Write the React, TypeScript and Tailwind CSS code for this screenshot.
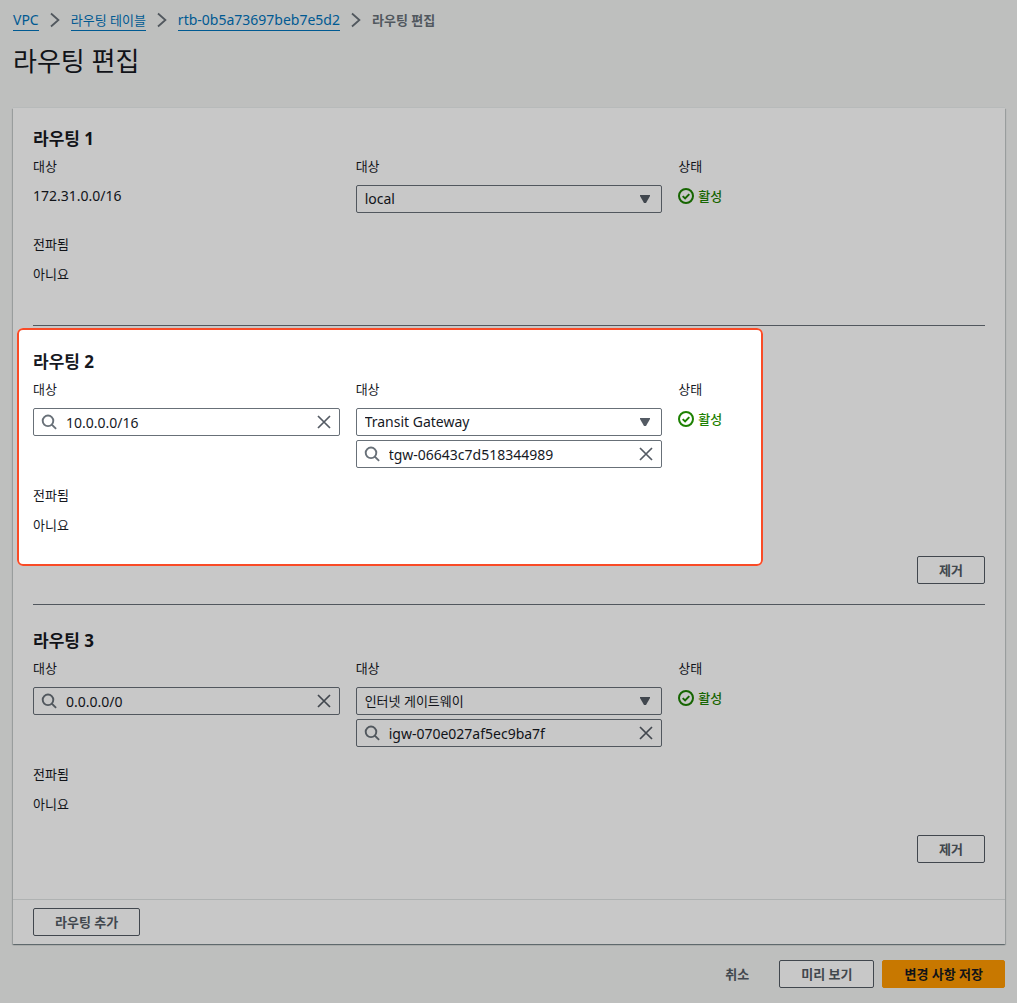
import { useId, useState } from "react";

type Target = { kind: string; id?: string };
type Route = {
  index: number;
  destination: string;
  target: Target;
  editable: boolean;
  highlighted?: boolean;
};

const ROUTES: Route[] = [
  { index: 1, destination: "172.31.0.0/16", target: { kind: "local" }, editable: false },
  {
    index: 2,
    destination: "10.0.0.0/16",
    target: { kind: "Transit Gateway", id: "tgw-06643c7d518344989" },
    editable: true,
    highlighted: true,
  },
  {
    index: 3,
    destination: "0.0.0.0/0",
    target: { kind: "인터넷 게이트웨이", id: "igw-070e027af5ec9ba7f" },
    editable: true,
  },
];

const TARGET_KINDS = ["local", "Transit Gateway", "인터넷 게이트웨이"];

function ChevronIcon() {
  return (
    <svg viewBox="0 0 10 16" className="h-4 w-2.5 shrink-0" fill="none" stroke="#687078" strokeWidth="1.8" aria-hidden="true">
      <path d="M1 1.5 8.4 8 1 14.5" />
    </svg>
  );
}

function SearchIcon() {
  return (
    <svg viewBox="0 0 16 16" className="h-4 w-4 shrink-0" fill="none" stroke="#687078" strokeWidth="1.9" aria-hidden="true">
      <circle cx="7" cy="6.8" r="5.3" />
      <path d="m10.8 10.6 4.3 4.3" />
    </svg>
  );
}

function CloseIcon() {
  return (
    <svg viewBox="0 0 16 16" className="h-4 w-4" fill="none" stroke="#545b64" strokeWidth="1.7" aria-hidden="true">
      <path d="m2 2 12 12M14 2 2 14" />
    </svg>
  );
}

function StatusIcon() {
  return (
    <svg viewBox="0 0 16 16" className="h-4 w-4" fill="none" stroke="#1d8102" strokeWidth="2" aria-hidden="true">
      <circle cx="8" cy="8" r="7" />
      <path d="m4.7 8.1 2.4 2.3 4.2-4.3" />
    </svg>
  );
}

function SearchField({ initial, label, id }: { initial: string; label?: string; id?: string }) {
  const [value, setValue] = useState(initial);
  return (
    <div className="flex h-7 items-center rounded-xs border border-[#687078] bg-white px-[7px]">
      <SearchIcon />
      <input
        id={id}
        aria-label={label}
        value={value}
        onChange={(e) => setValue(e.target.value)}
        className="h-full min-w-0 flex-1 bg-transparent pl-[9px] text-sm outline-none"
      />
      <button type="button" aria-label="지우기" onClick={() => setValue("")} className="shrink-0">
        <CloseIcon />
      </button>
    </div>
  );
}

function SelectField({ id, initial }: { id: string; initial: string }) {
  const [value, setValue] = useState(initial);
  return (
    <div className="relative mb-1">
      <select
        id={id}
        value={value}
        onChange={(e) => setValue(e.target.value)}
        className={`block h-7 w-full appearance-none rounded-xs border border-[#687078] bg-white pl-2 pr-8 outline-none ${
          value === "인터넷 게이트웨이" ? "text-[13px]" : "text-sm"
        }`}
      >
        {TARGET_KINDS.map((kind) => (
          <option key={kind}>{kind}</option>
        ))}
      </select>
      <svg viewBox="0 0 10 8" className="pointer-events-none absolute right-3 top-2.5 h-2 w-2.5" aria-hidden="true">
        <path d="M0 0h10v1L6 8H4L0 1z" fill="#545b64" />
      </svg>
    </div>
  );
}

function Button({ children }: { children: string }) {
  return (
    <button
      type="button"
      className="h-7 rounded-xs border border-[#545b64] bg-white px-[21px] text-[13px] font-bold leading-6 text-[#545b64]"
    >
      {children}
    </button>
  );
}

function RouteSection({ route }: { route: Route }) {
  const uid = useId();
  const first = route.index === 1;
  return (
    <section className={first ? "pt-5" : "relative mt-5 border-t border-[#687078] pt-[25px]"}>
      <h2 className="mb-[5px] text-[17px] font-bold leading-[22px]">라우팅 {route.index}</h2>
      <div className="grid grid-cols-3 gap-4 text-[13px] leading-[22px]">
        <div>
          {route.editable ? (
            <>
              <label htmlFor={`${uid}-dest`} className="mb-2 block">대상</label>
              <SearchField id={`${uid}-dest`} initial={route.destination} />
            </>
          ) : (
            <>
              <div className="mb-2">대상</div>
              <div className="text-sm leading-[22px]">{route.destination}</div>
            </>
          )}
        </div>
        <div>
          <label htmlFor={`${uid}-target`} className="mb-2 block">대상</label>
          <SelectField id={`${uid}-target`} initial={route.target.kind} />
          {route.target.id && <SearchField label="대상 ID" initial={route.target.id} />}
        </div>
        <div>
          <div className="mb-2">상태</div>
          <div className="flex items-center gap-1 font-medium text-[#1d8102]">
            <StatusIcon />
            <span>활성</span>
          </div>
        </div>
        <div>
          <div className="mb-2">전파됨</div>
          <div>아니요</div>
        </div>
      </div>
      <div className="mt-5 flex justify-end">{route.editable && <Button>제거</Button>}</div>
      {route.highlighted && (
        <div className="pointer-events-none absolute -left-4 right-[222px] top-0.5 bottom-[18px] z-10 rounded-md border-2 border-[#f94b27] shadow-[0_0_0_2000px_rgba(0,0,0,0.215)]" />
      )}
    </section>
  );
}

export default function App() {
  return (
    <div className="relative min-h-screen overflow-hidden bg-[#f2f4f3] px-3 pb-[15px] pl-[13px] pt-[9px] font-['Noto_Sans','Noto_Sans_CJK_KR',sans-serif] text-[#16191f]">
      <nav aria-label="탐색 경로" className="flex items-center text-[13px] leading-[22px]">
        <a href="#vpc" className="border-b border-[#0073bb] text-sm leading-5 text-[#0073bb]">VPC</a>
        <span className="mx-[11px]"><ChevronIcon /></span>
        <a href="#route-tables" className="border-b border-[#0073bb] leading-5 text-[#0073bb]">라우팅 테이블</a>
        <span className="mx-[11px]"><ChevronIcon /></span>
        <a href="#rtb" className="border-b border-[#0073bb] text-sm leading-5 text-[#0073bb]">rtb-0b5a73697beb7e5d2</a>
        <span className="mx-[11px]"><ChevronIcon /></span>
        <span aria-current="page" className="font-bold text-[#687078]">라우팅 편집</span>
      </nav>
      <h1 className="mb-[29px] mt-3 text-[26px] leading-9">라우팅 편집</h1>

      <form onSubmit={(e) => e.preventDefault()}>
        <div className="bg-white shadow-[0_1px_1px_0_rgba(0,28,36,0.3),1px_1px_1px_0_rgba(0,28,36,0.15),-1px_1px_1px_0_rgba(0,28,36,0.15),0_-1px_0_0_#eaeded]">
          <div className="px-5 pb-9">
            {ROUTES.map((route) => (
              <RouteSection key={route.index} route={route} />
            ))}
          </div>
          <div className="border-t border-[#e0e3e3] px-5 py-2">
            <Button>라우팅 추가</Button>
          </div>
        </div>
        <div className="mt-4 flex justify-end gap-2">
          <button type="button" className="h-7 px-[22px] text-[13px] font-bold leading-6 text-[#545b64]">
            취소
          </button>
          <Button>미리 보기</Button>
          <button
            type="submit"
            className="h-7 rounded-xs border border-[#ff9900] bg-[#ff9900] px-[21px] text-[13px] font-bold leading-6 text-[#16191f]"
          >
            변경 사항 저장
          </button>
        </div>
      </form>
    </div>
  );
}
